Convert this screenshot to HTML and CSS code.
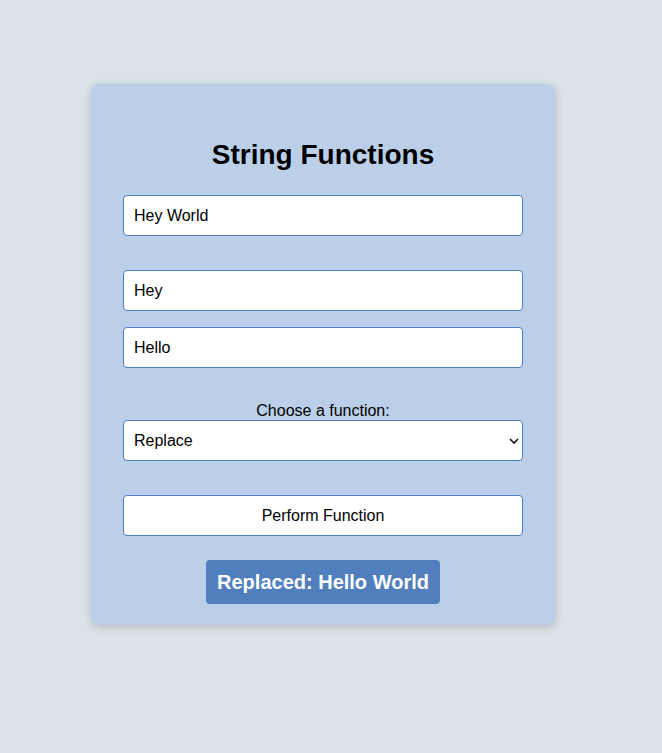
FILE: index.html
```html
<!DOCTYPE html>
<html>
<head>
<meta charset="utf-8">
<link rel="stylesheet" href="styles.css">
</head>
<body>
<div class="card">
  <h1 class="title">String Functions</h1>
  <input class="field field-main" type="text" value="Hey World">
  <input class="field field-find" type="text" value="Hey">
  <input class="field field-repl" type="text" value="Hello">
  <label class="label" for="fn">Choose a function:</label>
  <div class="select-wrap">
    <select id="fn" class="field select">
      <option>Replace</option>
    </select>
    <svg class="chev" width="10" height="6" viewBox="0 0 10 6"><path d="M1 1l4 4 4-4" fill="none" stroke="#111" stroke-width="1.6"/></svg>
  </div>
  <button class="btn">Perform Function</button>
  <div class="result">Replaced: Hello World</div>
</div>
</body>
</html>
```
FILE: styles.css
```css
html, body {
  margin: 0;
  padding: 0;
}
body {
  background: #dae3e8;
  font-family: "Liberation Sans", Arial, sans-serif;
  height: 753px;
}
.card {
  box-sizing: border-box;
  width: 464px;
  margin: 84px 0 0 91px;
  padding: 0 32px 21px;
  background: #bbd0e8;
  border-radius: 8px;
  box-shadow: 0 2px 8px rgba(0, 0, 0, 0.18);
  display: flex;
  flex-direction: column;
  align-items: center;
}
.title {
  margin: 55px 0 0;
  height: 56px;
  font-size: 28px;
  font-weight: bold;
  line-height: 32px;
  color: #000;
  text-align: center;
}
.field {
  box-sizing: border-box;
  width: 400px;
  height: 41px;
  border: 1px solid #4f7cc0;
  border-radius: 4px;
  background: #fff;
  padding: 0 10px;
  font-family: "Liberation Sans", Arial, sans-serif;
  font-size: 16px;
  color: #000;
  outline: none;
}
.field-main { margin: 0 0 34px; }
.field-find { margin: 0 0 16px; }
.field-repl { margin: 0 0 34px; }
.label {
  font-size: 16px;
  line-height: 18px;
  color: #000;
  margin-bottom: 0;
}
.select-wrap {
  position: relative;
  width: 400px;
  margin-bottom: 34px;
}
.select {
  display: block;
  appearance: none;
  -webkit-appearance: none;
}
.chev {
  position: absolute;
  right: 4px;
  top: 18px;
  pointer-events: none;
}
.btn {
  box-sizing: border-box;
  width: 400px;
  height: 41px;
  border: 1px solid #4f7cc0;
  border-radius: 4px;
  background: #fff;
  font-family: "Liberation Sans", Arial, sans-serif;
  font-size: 16px;
  color: #000;
  margin: 0 0 24px;
  padding: 0;
}
.result {
  background: #517fbd;
  color: #fff;
  font-weight: bold;
  font-size: 20px;
  line-height: 24px;
  padding: 10px 11px;
  border-radius: 4px;
}
```
